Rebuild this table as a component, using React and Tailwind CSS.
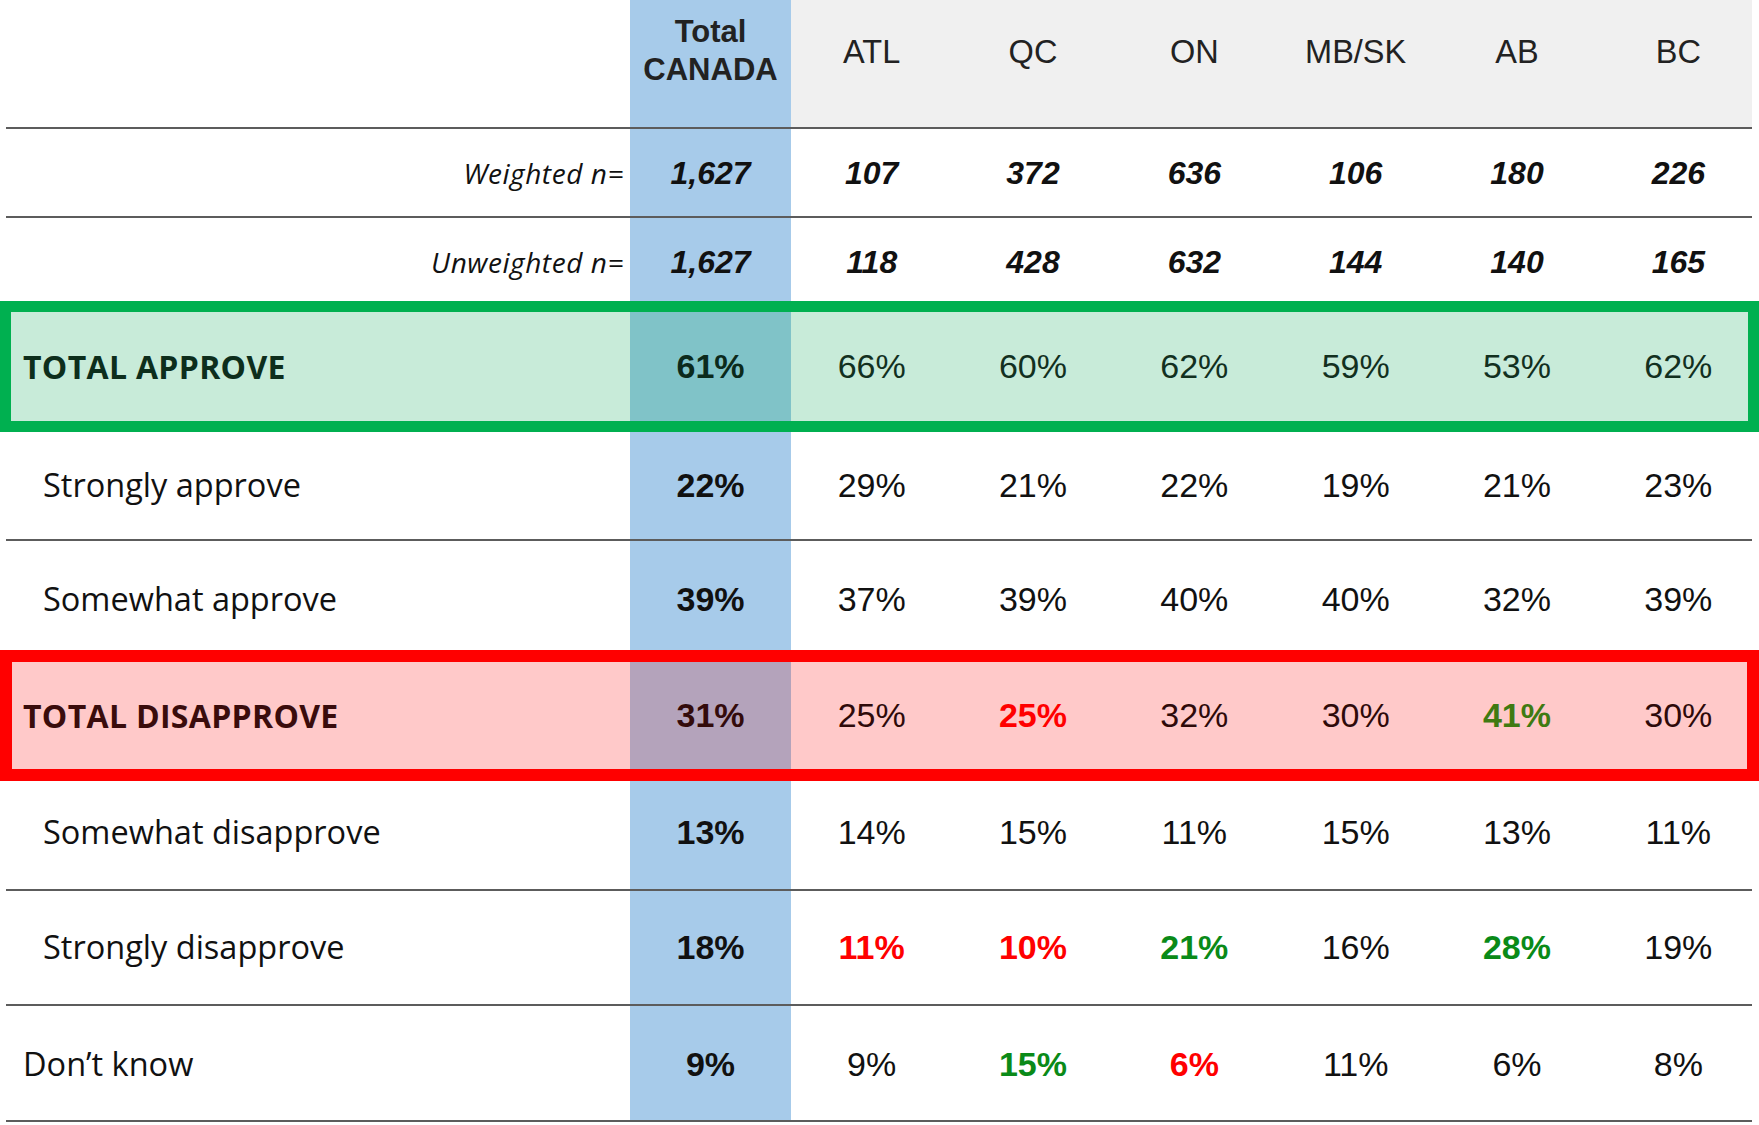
import React from "react";

const REGIONS = ["ATL", "QC", "ON", "MB/SK", "AB", "BC"];

const R = "r";
const G = "g";

const GRID = "grid grid-cols-[630px_161px_repeat(6,1fr)]";
const NUM = "font-['Liberation_Sans',Arial,sans-serif]";

function Line() {
  return <div className="ml-[6px] w-[1746px] h-[2px] bg-[#5c5c5c]" />;
}

function PlainRow({ label, total, vals, height, shift = "", labelIndent = true }) {
  return (
    <div className={GRID + " " + height}>
      <div className={"flex items-center text-[32.5px] text-[#111] font-['Open_Sans',sans-serif] " + shift + " " + (labelIndent ? "pl-[43px]" : "pl-[23px]")}>
        {label}
      </div>
      <div className={"bg-[#a7cbea] flex items-center justify-center text-[34px] font-bold text-[#111] " + NUM + " " + shift}>
        {total}
      </div>
      {vals.map((v, i) => {
        let cls = "text-[#111]";
        if (v[1] === R) cls = "text-[#ff0000] font-bold";
        else if (v[1] === G) cls = "text-[#0a8a18] font-bold";
        return (
          <div key={i} className={"flex items-center justify-center text-[34px] " + NUM + " " + cls + " " + shift}>
            {v[0]}
          </div>
        );
      })}
    </div>
  );
}

function NRow({ label, total, vals, height, shift = "" }) {
  return (
    <div className={GRID + " " + height}>
      <div className={"flex items-center justify-end pr-[6px] text-[28px] italic text-[#111] font-['Open_Sans',sans-serif] tracking-[0.02em] " + shift}>
        {label}
      </div>
      <div className={"bg-[#a7cbea] flex items-center justify-center text-[32px] font-bold italic text-[#111] " + NUM + " " + shift}>
        {total}
      </div>
      {vals.map((v, i) => (
        <div key={i} className={"flex items-center justify-center text-[32px] font-bold italic text-[#111] " + NUM + " " + shift}>
          {v}
        </div>
      ))}
    </div>
  );
}

export default function App() {
  return (
    <div className="w-[1759px] h-[1125px] bg-white overflow-hidden">
      {/* Header */}
      <div className={GRID + " h-[127px]"}>
        <div />
        <div className={"bg-[#a7cbea] flex flex-col items-center pt-[13px] text-[31px] leading-[38px] font-bold text-[#222] " + NUM}>
          <span>Total</span>
          <span>CANADA</span>
        </div>
        {REGIONS.map((r, i) => (
          <div
            key={r}
            className={
              "bg-[#f0f0f0] bg-clip-padding flex justify-center pt-[33px] text-[32.5px] leading-[38px] text-[#222] " +
              NUM +
              " " +
              (i === 5 ? "border-r-[7px] border-white pl-[7px]" : "")
            }
          >
            {r}
          </div>
        ))}
      </div>
      <Line />
      <NRow label="Weighted n=" total="1,627" vals={["107", "372", "636", "106", "180", "226"]} height="h-[87px]" />
      <Line />
      <NRow label="Unweighted n=" total="1,627" vals={["118", "428", "632", "144", "140", "165"]} height="h-[83px]" shift="pt-[5px]" />

      {/* TOTAL APPROVE box */}
      <div className={"relative bg-[#c8ebd9] h-[131px] " + GRID}>
        <div className="flex items-center pl-[23px] text-[32px] font-bold text-[#0d2e1c] font-['Open_Sans',sans-serif] tracking-[0.01em]">
          TOTAL APPROVE
        </div>
        <div className={"bg-[#80c3c8] flex items-center justify-center text-[34px] font-bold text-[#0b2a1c] " + NUM}>
          61%
        </div>
        {["66%", "60%", "62%", "59%", "53%", "62%"].map((v, i) => (
          <div key={i} className={"flex items-center justify-center text-[34px] text-[#12301f] " + NUM}>
            {v}
          </div>
        ))}
        <div className="absolute inset-0 border-[11px] border-[#00b050] pointer-events-none" />
      </div>

      <PlainRow label="Strongly approve" total="22%" vals={[["29%"], ["21%"], ["22%"], ["19%"], ["21%"], ["23%"]]} height="h-[107px]" />
      <Line />
      <PlainRow label="Somewhat approve" total="39%" vals={[["37%"], ["39%"], ["40%"], ["40%"], ["32%"], ["39%"]]} height="h-[109px]" shift="pt-[8px]" />

      {/* TOTAL DISAPPROVE box */}
      <div className={"relative bg-[#ffc9c9] h-[131px] " + GRID}>
        <div className="flex items-center pl-[23px] text-[32px] font-bold text-[#3a0c0c] font-['Open_Sans',sans-serif] tracking-[0.01em]">
          TOTAL DISAPPROVE
        </div>
        <div className={"bg-[#b4a3bb] flex items-center justify-center text-[34px] font-bold text-[#330b0b] " + NUM}>
          31%
        </div>
        <div className={"flex items-center justify-center text-[34px] text-[#2e0a0a] " + NUM}>25%</div>
        <div className={"flex items-center justify-center text-[34px] font-bold text-[#ff0000] " + NUM}>25%</div>
        <div className={"flex items-center justify-center text-[34px] text-[#2e0a0a] " + NUM}>32%</div>
        <div className={"flex items-center justify-center text-[34px] text-[#2e0a0a] " + NUM}>30%</div>
        <div className={"flex items-center justify-center text-[34px] font-bold text-[#3f7a12] " + NUM}>41%</div>
        <div className={"flex items-center justify-center text-[34px] text-[#2e0a0a] " + NUM}>30%</div>
        <div className="absolute inset-0 border-[12px] border-[#ff0000] pointer-events-none" />
      </div>

      <PlainRow label="Somewhat disapprove" total="13%" vals={[["14%"], ["15%"], ["11%"], ["15%"], ["13%"], ["11%"]]} height="h-[108px]" shift="pb-[6px]" />
      <Line />
      <PlainRow label="Strongly disapprove" total="18%" vals={[["11%", R], ["10%", R], ["21%", G], ["16%"], ["28%", G], ["19%"]]} height="h-[113px]" />
      <Line />
      <PlainRow label="Don’t know" total="9%" labelIndent={false} vals={[["9%"], ["15%", G], ["6%", R], ["11%"], ["6%"], ["8%"]]} height="h-[114px]" shift="pt-[3px]" />
      <Line />
    </div>
  );
}
